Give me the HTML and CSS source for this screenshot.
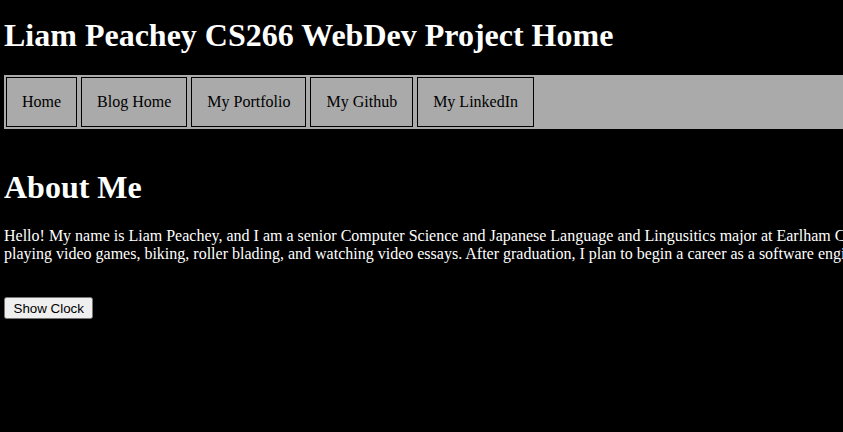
FILE: index.html
```html
<!DOCTYPE html>
<html>
<head>
<meta charset="utf-8">
<title>Liam Peachey CS266 WebDev Project Home</title>
<link rel="stylesheet" href="styles.css">
</head>
<body>
<h1 class="title">Liam Peachey CS266 WebDev Project Home</h1>
<nav class="navbar">
  <a class="navlink" href="#">Home</a>
  <a class="navlink" href="#">Blog Home</a>
  <a class="navlink" href="#">My Portfolio</a>
  <a class="navlink" href="#">My Github</a>
  <a class="navlink" href="#">My LinkedIn</a>
</nav>
<h1 class="section-title">About Me</h1>
<p class="about">Hello! My name is Liam Peachey, and I am a senior Computer Science and Japanese Language and Lingusitics major at Earlham College. In my free time, I enjoy playing video games, biking, roller blading, and watching video essays. After graduation, I plan to begin a career as a software engineer.</p>
<button class="clock-btn" type="button">Show Clock</button>
</body>
</html>
```
FILE: styles.css
```css
html {
  background: #000;
}
body {
  margin: 4px 0 4px 4px;
  overflow: hidden;
  background: #000;
  color: #fff;
  font-family: "Liberation Serif", "Times New Roman", serif;
  font-size: 16px;
}
.title {
  font-size: 32px;
  margin: 13px 0 21px;
}
.navbar {
  background: #aaaaaa;
  padding: 2px;
  white-space: nowrap;
}
.navlink {
  display: inline-block;
  border: 1px solid #000;
  padding: 15px 15px;
  color: #000;
  text-decoration: none;
}
.section-title {
  font-size: 32px;
  margin: 40px 0 21px;
}
.about {
  width: 1080px;
  margin: 0 0 34px;
}
.clock-btn {
  font-family: "Liberation Sans", Arial, sans-serif;
  font-size: 13.33px;
  padding: 2px 7.5px 1px;
}
```
